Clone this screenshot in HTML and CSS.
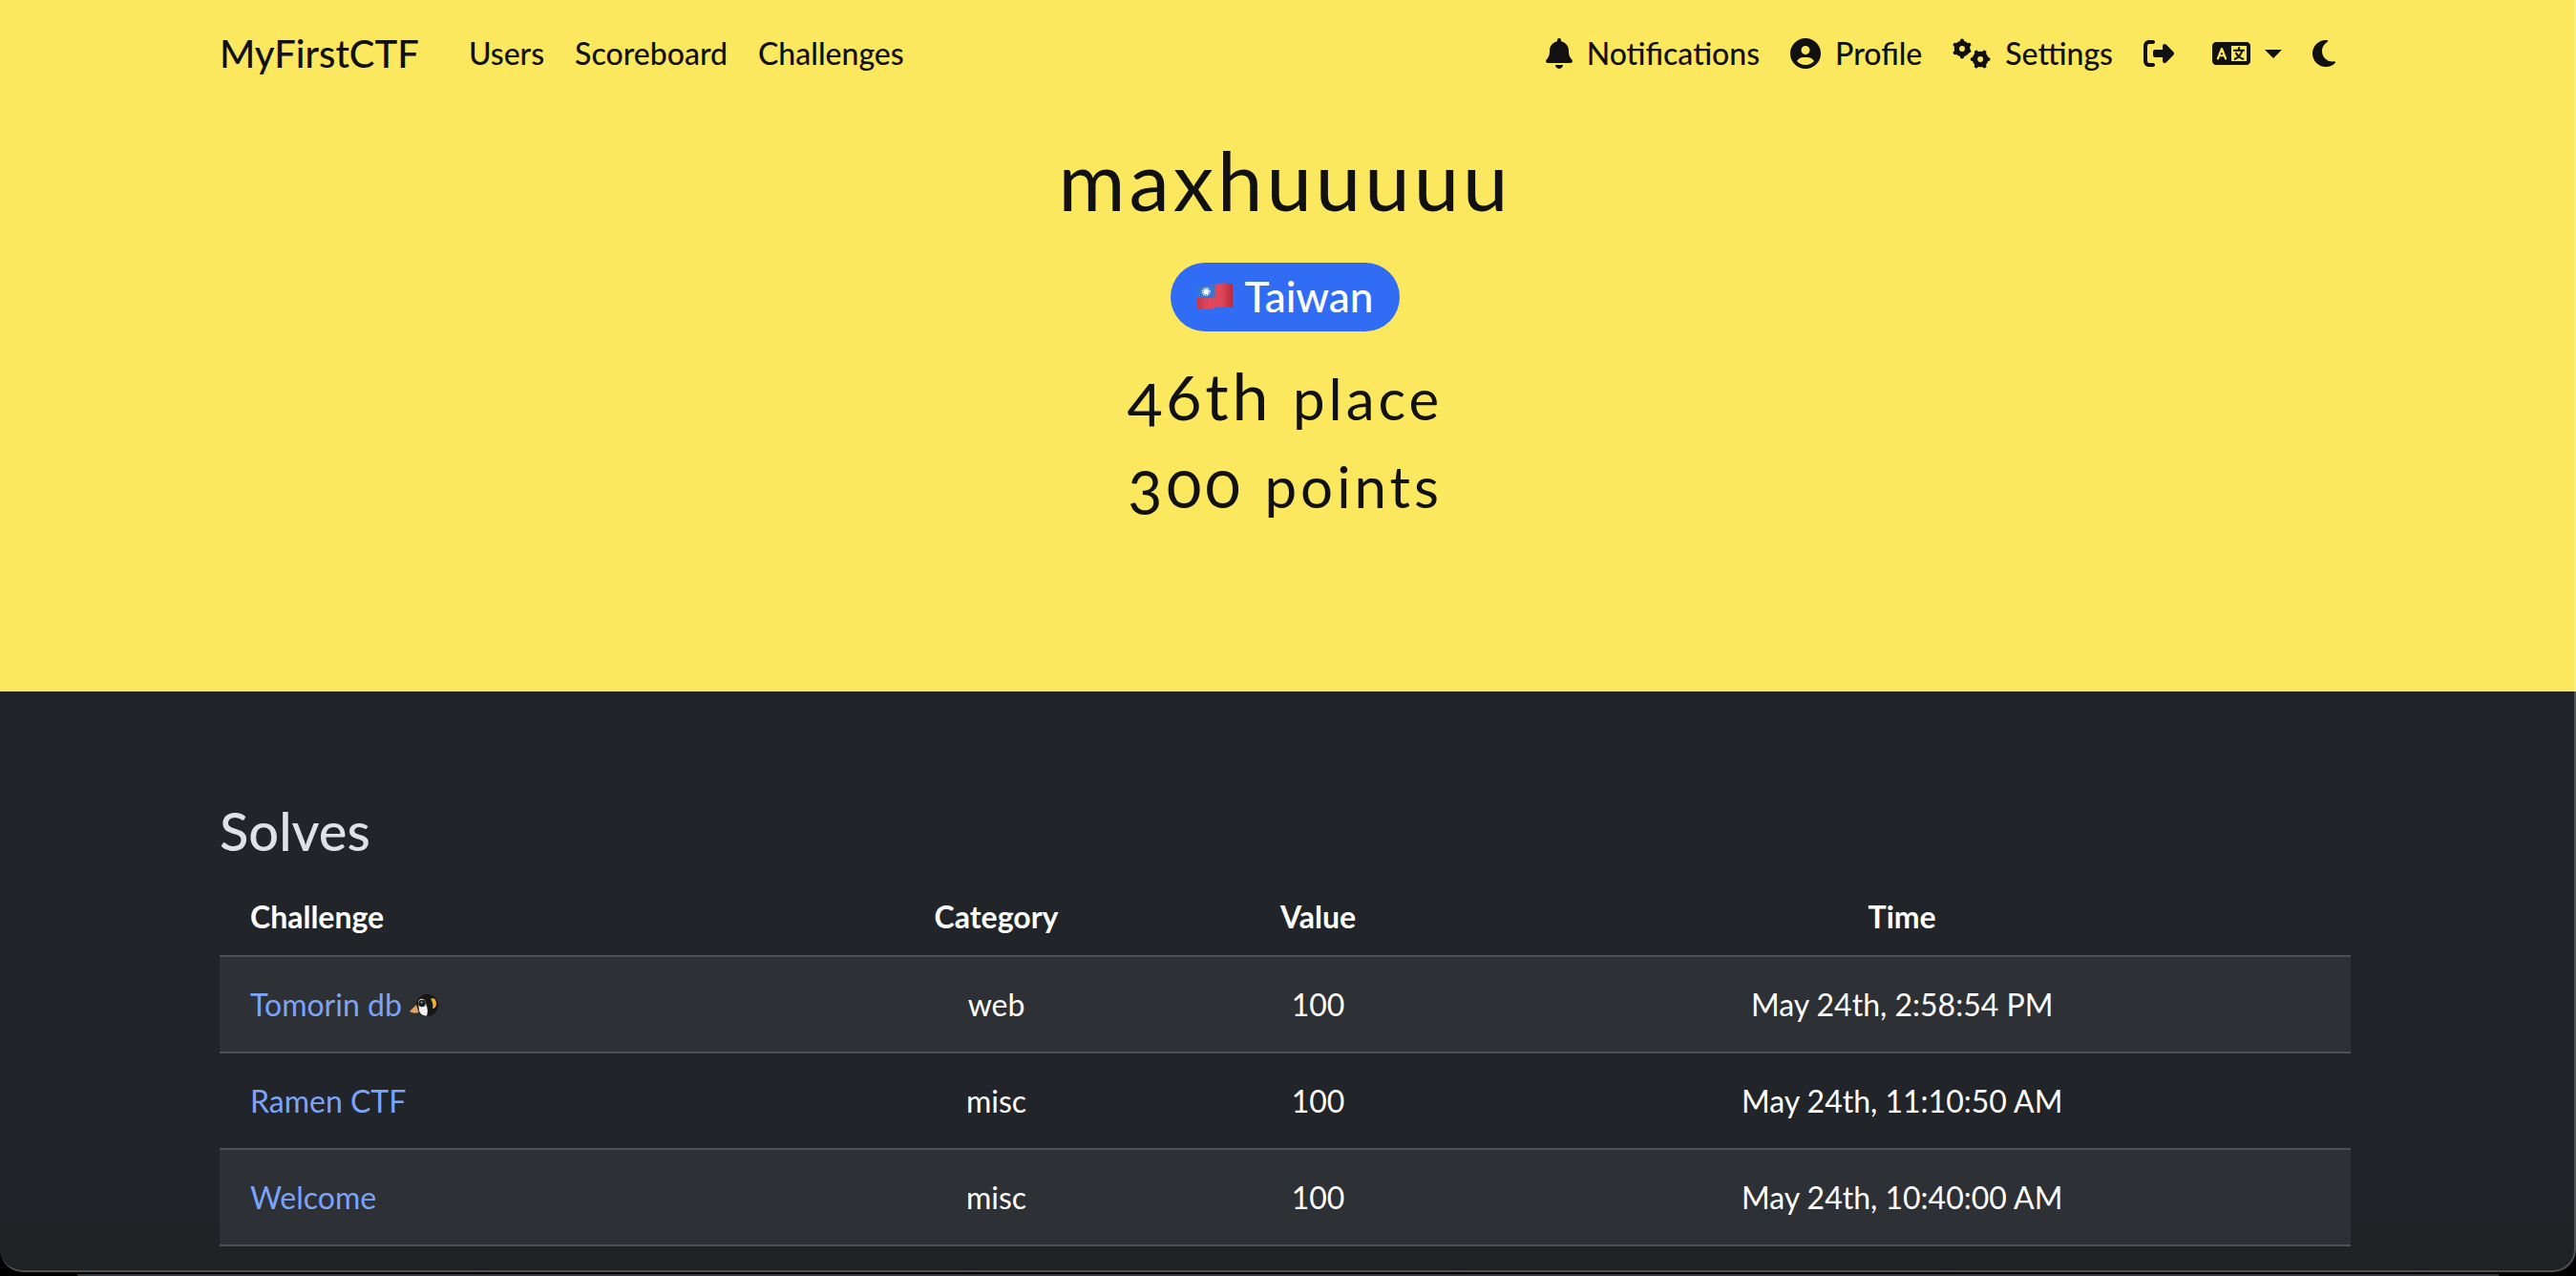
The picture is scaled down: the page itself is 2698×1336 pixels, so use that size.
FILE: index.html
```html
<!DOCTYPE html>
<html lang="en">
<head>
<meta charset="utf-8">
<title>MyFirstCTF</title>
<link rel="stylesheet" href="styles.css">
</head>
<body>
<div class="window">
  <header class="hero">
    <nav class="navbar container">
      <a class="brand" href="#">MyFirstCTF</a>
      <div class="nav-group">
        <a class="nav-link" href="#">Users</a>
        <a class="nav-link" href="#">Scoreboard</a>
        <a class="nav-link" href="#">Challenges</a>
      </div>
      <div class="nav-group nav-end">
        <a class="nav-link" href="#"><svg class="icon w28" viewBox="0 0 448 512" aria-hidden="true"><path d="M224 0c-17.700 0-32 14.300-32 32v19.200C119 66 64 130.600 64 208v18.800c0 47-17.300 92.400-48.500 127.600l-7.400 8.300c-8.400 9.400-10.400 22.900-5.300 34.400S19.400 416 32 416h384c12.600 0 24-7.400 29.200-18.900s3.100-25-5.300-34.400l-7.400-8.300C401.300 319.200 384 273.900 384 226.800V208c0-77.400-55-142-128-156.800V32c0-17.700-14.300-32-32-32zm45.300 493.300c12-12 18.700-28.300 18.700-45.300H160c0 17 6.700 33.300 18.700 45.300S207 512 224 512s33.300-6.700 45.300-18.700z"/></svg>Notifications</a>
        <a class="nav-link" href="#"><svg class="icon w32" viewBox="0 0 512 512" aria-hidden="true"><path d="M399 384.200C376.900 345.800 335.400 320 288 320h-64c-47.400 0-88.900 25.800-111 64.200 35.200 39.200 86.200 63.800 143 63.800s107.800-24.700 143-63.800zM0 256a256 256 0 1 1 512 0A256 256 0 1 1 0 256zm256 16a72 72 0 1 0 0-144 72 72 0 1 0 0 144z"/></svg>Profile</a>
        <a class="nav-link" href="#"><svg class="icon w40" viewBox="0 0 640 512" aria-hidden="true"><g fill="none" stroke="currentColor"><circle cx="160" cy="176" r="90" stroke-width="86"/><circle cx="466" cy="352" r="90" stroke-width="86"/></g><g stroke="currentColor" stroke-width="66" stroke-linecap="round"><path d="M160 72V42M70 124l-26-15M70 228l-26 15M160 280v30M250 228l26-15M250 124l26-15M362 352h-30M414 262l-15-26M518 262l15-26M570 352h30M518 442l15 26M414 442l-15 26"/></g></svg>Settings</a>
        <a class="nav-link logout" href="#" aria-label="Log out"><svg class="icon w32" viewBox="0 0 512 512" aria-hidden="true"><path d="M377.900 105.900 500.700 228.700c7.200 7.200 11.300 17.100 11.300 27.300s-4.100 20.100-11.300 27.300L377.900 406.100c-6.400 6.400-15 9.900-24 9.900-18.700 0-33.900-15.200-33.900-33.900V320H192c-17.700 0-32-14.300-32-32v-64c0-17.700 14.300-32 32-32h128v-62.100c0-18.700 15.200-33.900 33.900-33.900 9 0 17.600 3.600 24 9.900zM160 96H96c-17.700 0-32 14.300-32 32v256c0 17.700 14.300 32 32 32h64c17.700 0 32 14.300 32 32s-14.300 32-32 32H96c-53 0-96-43-96-96V128c0-53 43-96 96-96h64c17.700 0 32 14.300 32 32s-14.300 32-32 32z"/></svg></a>
        <button class="nav-link" type="button" aria-label="Language"><svg class="icon w40" viewBox="0 0 640 512" aria-hidden="true"><path fill-rule="evenodd" d="M64 64C28.700 64 0 92.700 0 128v256c0 35.300 28.700 64 64 64h512c35.300 0 64-28.700 64-64V128c0-35.300-28.700-64-64-64zm256 64h256v256H320z"/><path class="letter" d="m94 344 66-168 66 168M120 292h80"/><path class="glyph" d="M448 160v38M368 204h160M500 212c-18 64-60 110-118 136M400 250c24 48 62 80 116 98"/></svg><span class="caret"></span></button>
        <button class="nav-link" type="button" aria-label="Toggle theme"><svg class="icon w24" viewBox="0 0 384 512" aria-hidden="true"><path d="M223.500 32C100 32 0 132.300 0 256s100 224 223.500 224c60.600 0 115.500-24.200 155.800-63.400 5-4.900 6.300-12.500 3.100-18.700s-10.100-9.700-17-8.500c-9.800 1.700-19.800 2.600-30.100 2.600-96.900 0-175.500-78.800-175.500-176 0-65.800 36-123.100 89.300-153.300 6.100-3.500 9.200-10.500 7.700-17.300s-7.300-11.900-14.300-12.500c-6.300-.5-12.600-.8-19-.8z"/></svg></button>
      </div>
    </nav>
    <div class="profile">
      <h1>maxhuuuuu</h1>
      <div class="country"><span class="badge"><svg class="flag" viewBox="0 0 36 27" role="img" aria-label="Flag of Taiwan"><defs><linearGradient id="cloth"><stop offset="0" stop-color="#c9344b"/><stop offset=".35" stop-color="#e2485b"/><stop offset=".7" stop-color="#dd4658"/><stop offset="1" stop-color="#b5283c"/></linearGradient></defs><path fill="url(#cloth)" d="M0 3c7 2 12 0 18-1.500S30 0 36 1v24c-6-1-12-1-18 .5S7 28 0 26z"/><path fill="#3277d2" d="M0 3c7 2 12 0 18-1.500V14.500C12 16 6 16 0 15z"/><circle cx="9" cy="9" r="3.600" fill="none" stroke="#e8f4ff" stroke-width="2" stroke-dasharray="1 .88"/><circle cx="9" cy="9" r="2.600" fill="#fff"/></svg>Taiwan</span></div>
      <h2>46th <small>place</small></h2>
      <h2>300 <small>points</small></h2>
    </div>
  </header>
  <main class="content">
    <div class="container">
      <h3>Solves</h3>
      <table>
        <colgroup><col class="col-challenge"><col class="col-category"><col class="col-value"><col></colgroup>
        <thead><tr><th scope="col">Challenge</th><th scope="col">Category</th><th scope="col">Value</th><th scope="col">Time</th></tr></thead>
        <tbody>
          <tr><td><a href="#">Tomorin db <svg class="penguin" viewBox="0 0 30 26" role="img" aria-label="penguin"><circle cx="18.500" cy="12.500" r="11.500" fill="#171717"/><path fill="#f2f2f2" d="M9 9c1-4 6-5 8 1 1 5 3 8 1 13.500-4 0-7-2-8-5z"/><circle cx="13" cy="10.500" r="3.800" fill="#1a1d22"/><circle cx="12.500" cy="9.500" r="1" fill="#aaa"/><path fill="#e9a35c" d="M7 12 0 19c3 2 6 2 9.500 1z"/><path fill="#f5ab35" d="M22 6c4-2 6 1 6 5 0 3-2 5-4 5 1-4 0-7-2-10z"/></svg></a></td><td>web</td><td>100</td><td>May 24th, 2:58:54 PM</td></tr>
          <tr><td><a href="#">Ramen CTF</a></td><td>misc</td><td>100</td><td>May 24th, 11:10:50 AM</td></tr>
          <tr><td><a href="#">Welcome</a></td><td>misc</td><td>100</td><td>May 24th, 10:40:00 AM</td></tr>
        </tbody>
      </table>
    </div>
  </main>
</div>
</body>
</html>
```
FILE: styles.css
```css
* {
  box-sizing: border-box;
}

html {
  background: #000;
}

body {
  display: flow-root;
  margin: 0;
  color: #dee2e6;
  font: 400 32px/48px Lato, "Noto Sans", sans-serif;
}

/* Edge of the window behind this one */
body::after {
  content: "";
  display: block;
  width: 94%;
  height: 2px;
  margin: 2px auto 0;
  background: #343a42;
}

.window {
  position: relative;
  min-height: calc(100vh - 4px);
  overflow: hidden;
  border-radius: 0 0 24px 24px;
  background: #212529 linear-gradient(transparent calc(100% - 80px), rgba(30, 31, 32, 0.8)) no-repeat;
}

.window::after {
  content: "";
  position: absolute;
  inset: 0;
  border: solid rgba(255, 255, 255, 0.22);
  border-width: 0 2px 2px 0;
  border-radius: inherit;
  pointer-events: none;
}

.container {
  width: 83%;
  max-width: 2232px;
  margin: 0 auto;
}

a {
  color: #7ba4f8;
  text-decoration: none;
}

/* Header */
.hero {
  padding: 16px 6px 164px 0;
  background: #fce85e;
  color: #111;
}

.navbar {
  display: flex;
  align-items: center;
  height: 80px;
  font-weight: 500;
}

.brand {
  margin-right: 36px;
  color: inherit;
  font-size: 40px;
  line-height: 60px;
}

.nav-group {
  display: flex;
  align-items: center;
}

.nav-end {
  margin-left: auto;
}

.nav-link {
  display: flex;
  align-items: center;
  gap: 15px;
  padding: 16px;
  border: 0;
  background: none;
  color: inherit;
  font: inherit;
}

.logout {
  margin-right: 8px;
}

.icon {
  height: 32px;
  fill: currentColor;
}

.w24 { width: 24px; }
.w28 { width: 28px; }
.w32 { width: 32px; }
.w40 { width: 40px; }

.letter,
.glyph {
  fill: none;
  stroke: #fce85e;
  stroke-width: 34px;
  stroke-linecap: round;
  stroke-linejoin: round;
}

.glyph {
  stroke: currentColor;
}

.caret {
  border-top: 9px solid;
  border-right: 9px solid transparent;
  border-left: 9px solid transparent;
}

.profile {
  padding-top: 44px;
  text-align: center;
}

h1,
h2 {
  margin: 0 0 16px;
  font-weight: 400;
  letter-spacing: 4px;
  font-variant-numeric: oldstyle-nums;
}

h1 {
  font-size: 85px;
  line-height: 96px;
}

h2 {
  font-size: 68px;
  line-height: 76px;
}

small {
  font-size: 60px;
  line-height: 60px;
}

.country {
  display: flex;
  justify-content: center;
  margin: 39px 0 29px;
}

.badge {
  display: flex;
  align-items: center;
  gap: 13px;
  padding: 14px 28px 16px;
  border-radius: 36px;
  background: #316cf4;
  color: #fff;
  font-size: 44px;
  font-weight: 500;
  line-height: 42px;
}

.flag {
  width: 37px;
  height: 28px;
}

/* Solved challenges */
.content {
  padding: 112px 6px 24px 0;
}

h3 {
  margin: 0 0 17px;
  font-size: 56px;
  font-weight: 500;
  line-height: 67px;
}

table {
  width: 100%;
  table-layout: fixed;
  border-collapse: collapse;
  color: #fff;
}

.col-challenge { width: 27.7%; }
.col-category { width: 17.5%; }
.col-value { width: 12.7%; }

th,
td {
  padding: 16px 32px;
  border-bottom: 2px solid #4d5154;
  text-align: center;
}

td {
  height: 101px;
}

th:first-child,
td:first-child {
  text-align: left;
}

tbody tr:nth-child(odd) {
  background: #2d3035;
}

.penguin {
  width: 30px;
  height: 26px;
  vertical-align: -2px;
}
```
